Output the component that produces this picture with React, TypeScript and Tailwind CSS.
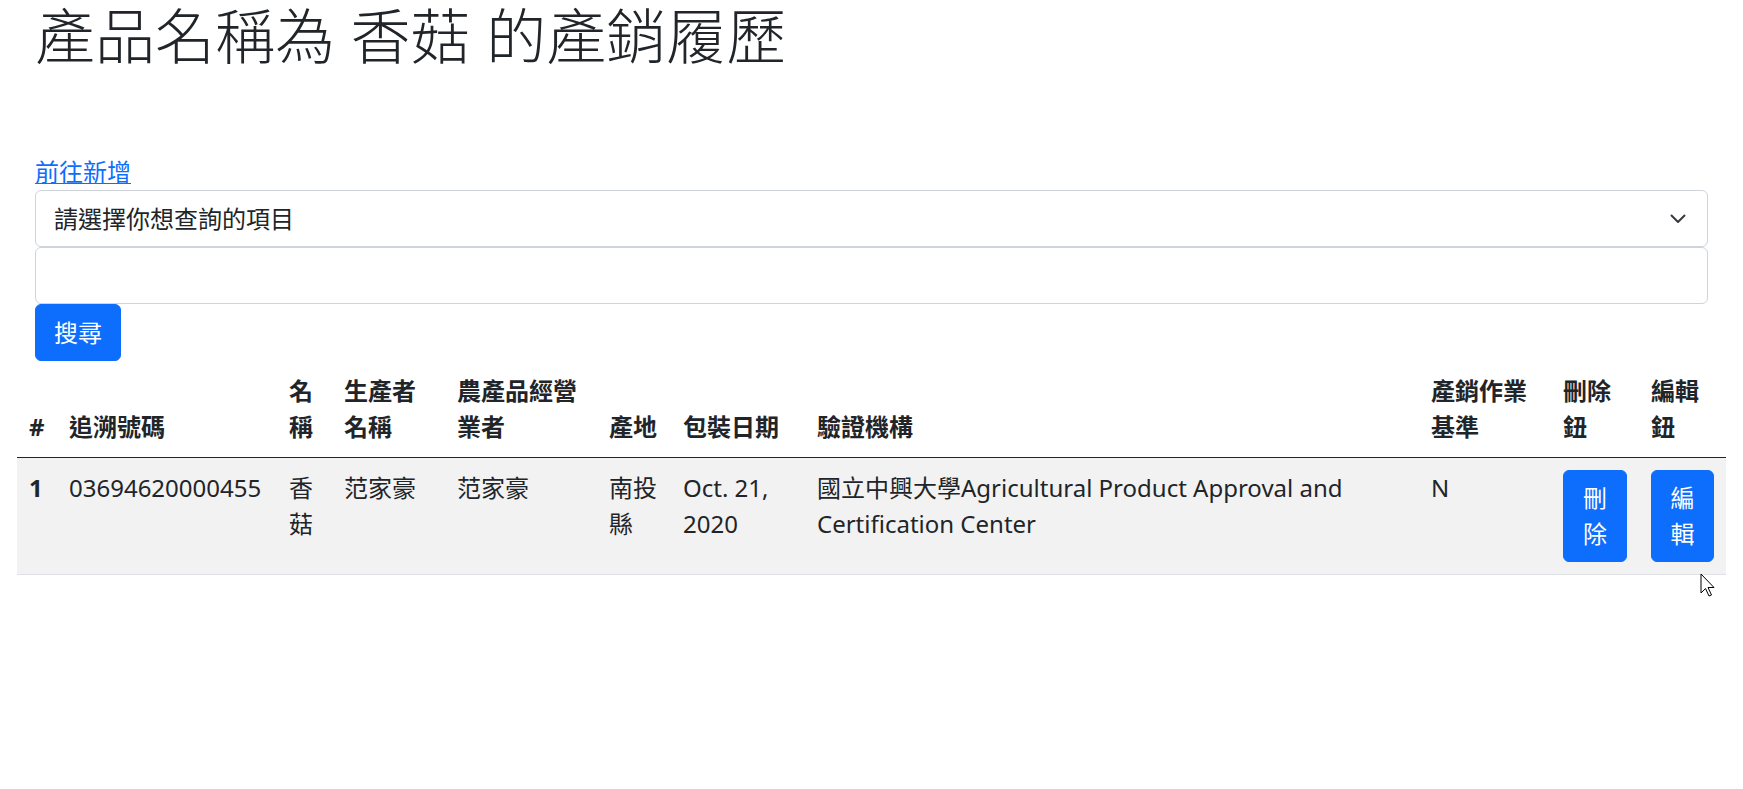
const columns = [
  { label: '#', width: 'w-[40px]' },
  { label: '追溯號碼', width: 'w-[220px]' },
  { label: '名稱', width: 'w-[55px]' },
  { label: '生產者名稱', width: 'w-[113px]' },
  { label: '農產品經營業者', width: 'w-[152px]' },
  { label: '產地', width: 'w-[74px]' },
  { label: '包裝日期', width: 'w-[134px]' },
  { label: '驗證機構', width: 'w-[614px]' },
  { label: '產銷作業基準', width: 'w-[132px]' },
  { label: '刪除鈕', width: 'w-[88px]' },
  { label: '編輯鈕', width: 'w-[87px]' },
];

const records = [
  {
    id: 1,
    trace: '03694620000455',
    name: '香菇',
    producer: '范家豪',
    operator: '范家豪',
    origin: '南投縣',
    packed: 'Oct. 21, 2020',
    certifier: '國立中興大學Agricultural Product Approval and Certification Center',
    standard: 'N',
  },
];

function ActionButton({ label }: { label: string }) {
  return (
    <button className="inline-block rounded-[6px] border border-[#0d6efd] bg-[#0d6efd] px-[18px] py-[9px] text-center leading-[36px] text-white">
      {label}
    </button>
  );
}

export default function App() {
  return (
    <div className="relative min-h-screen bg-white px-[17px] font-['Noto_Sans','Noto_Sans_CJK_TC',sans-serif] text-[24px] leading-[36px] text-[#212529]">
      {/* Header + search form */}
      <div className="px-[18px]">
        <h1 className="mb-[82px] text-[60px] font-light leading-[72px]">產品名稱為 香菇 的產銷履歷</h1>

        <div>
          <a href="#" className="text-[#0d6efd] underline decoration-1 underline-offset-2">
            前往新增
          </a>
        </div>

        <div className="flex h-[57px] items-center justify-between rounded-[6px] border border-[#ced4da] bg-white pl-[18px] pr-[21px]">
          <span>請選擇你想查詢的項目</span>
          <svg width="16" height="10" viewBox="0 0 16 10" fill="none">
            <path d="M1.5 1.5 L8 8 L14.5 1.5" stroke="#343a40" strokeWidth="2" strokeLinecap="round" strokeLinejoin="round" />
          </svg>
        </div>

        <input
          type="text"
          className="block h-[57px] w-full rounded-[6px] border border-[#ced4da] bg-white px-[18px] outline-none"
        />

        <button className="flex h-[57px] items-center rounded-[6px] border border-[#0d6efd] bg-[#0d6efd] px-[18px] text-white">
          搜尋
        </button>
      </div>

      {/* Records table */}
      <table className="w-full table-fixed border-collapse">
        <colgroup>
          {columns.map((c) => (
            <col key={c.label} className={c.width} />
          ))}
        </colgroup>
        <thead>
          <tr className="border-b border-[#212529]">
            {columns.map((c) => (
              <th key={c.label} className="p-3 text-left align-bottom font-bold">
                {c.label}
              </th>
            ))}
          </tr>
        </thead>
        <tbody>
          {records.map((r) => (
            <tr key={r.id} className="border-b border-[#dee2e6] bg-[#f2f2f2]">
              <td className="p-3 align-top font-bold">{r.id}</td>
              <td className="p-3 align-top">{r.trace}</td>
              <td className="p-3 align-top">{r.name}</td>
              <td className="p-3 align-top">{r.producer}</td>
              <td className="p-3 align-top">{r.operator}</td>
              <td className="p-3 align-top">{r.origin}</td>
              <td className="p-3 align-top">{r.packed}</td>
              <td className="p-3 align-top">{r.certifier}</td>
              <td className="p-3 align-top">{r.standard}</td>
              <td className="p-3 align-top">
                <ActionButton label="刪除" />
              </td>
              <td className="p-3 align-top">
                <ActionButton label="編輯" />
              </td>
            </tr>
          ))}
        </tbody>
      </table>

      {/* mouse pointer left in the screenshot */}
      <svg className="absolute left-[1700px] top-[573px]" width="18" height="26" viewBox="0 0 18 26">
        <path d="M1 1 L1 20 L5.5 15.5 L9 23 L11.5 22 L8 14.5 L14 14.5 Z" fill="#fff" stroke="#000" strokeWidth="1" strokeLinejoin="round" />
      </svg>
    </div>
  );
}
